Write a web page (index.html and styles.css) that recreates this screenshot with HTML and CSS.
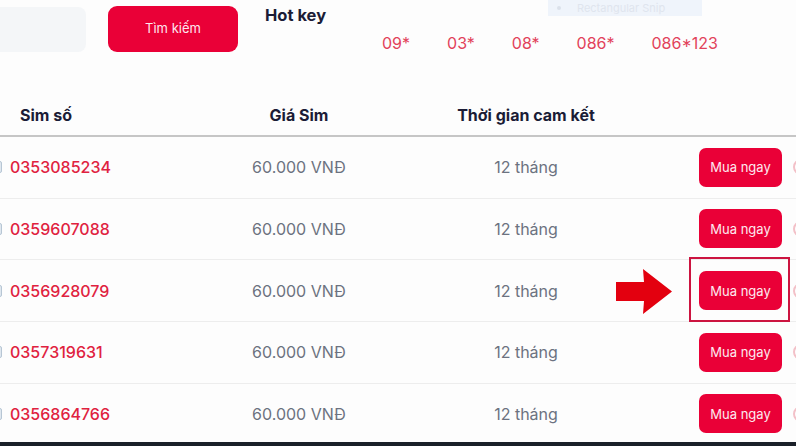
FILE: index.html
```html
<!DOCTYPE html>
<html lang="vi">
<head>
<meta charset="utf-8">
<link rel="stylesheet" href="styles.css">
</head>
<body>
<div class="page">
  <div class="snip"><span class="snip-dot"></span>Rectangular Snip</div>
  <div class="top">
    <div class="search-input"></div>
    <button class="btn-search">Tìm kiếm</button>
    <div class="hotkey">
      <div class="hotkey-title">Hot key</div>
      <div class="hotkey-list">
        <span>09*</span><span>03*</span><span>08*</span><span>086*</span><span>086*123</span>
      </div>
    </div>
  </div>
  <div class="table">
    <div class="row head">
      <div class="c1">Sim số</div>
      <div class="c2">Giá Sim</div>
      <div class="c3">Thời gian cam kết</div>
      <div class="c4"></div>
    </div>
    <div class="row">
      <div class="c1"><span class="chk"></span><span class="num">0353085234</span></div>
      <div class="c2">60.000 VNĐ</div>
      <div class="c3">12 tháng</div>
      <div class="c4"><button class="buy">Mua ngay</button><span class="ring"></span></div>
    </div>
    <div class="row">
      <div class="c1"><span class="chk"></span><span class="num">0359607088</span></div>
      <div class="c2">60.000 VNĐ</div>
      <div class="c3">12 tháng</div>
      <div class="c4"><button class="buy">Mua ngay</button><span class="ring"></span></div>
    </div>
    <div class="row marked">
      <div class="c1"><span class="chk"></span><span class="num">0356928079</span></div>
      <div class="c2">60.000 VNĐ</div>
      <div class="c3">12 tháng</div>
      <div class="c4"><button class="buy">Mua ngay</button><span class="ring"></span></div>
      <svg class="arrow" width="58" height="47" viewBox="0 0 58 47"><polygon points="0,13 28,13 27,0 56,22.5 27,45 28,32 0,32" fill="#e3000f"/></svg>
      <div class="highlight"></div>
    </div>
    <div class="row">
      <div class="c1"><span class="chk"></span><span class="num">0357319631</span></div>
      <div class="c2">60.000 VNĐ</div>
      <div class="c3">12 tháng</div>
      <div class="c4"><button class="buy">Mua ngay</button><span class="ring"></span></div>
    </div>
    <div class="row">
      <div class="c1"><span class="chk"></span><span class="num">0356864766</span></div>
      <div class="c2">60.000 VNĐ</div>
      <div class="c3">12 tháng</div>
      <div class="c4"><button class="buy">Mua ngay</button><span class="ring"></span></div>
    </div>
  </div>
  <div class="taskbar"></div>
</div>
</body>
</html>
```

FILE: styles.css
```css
html, body {
  margin: 0;
  padding: 0;
  overflow: hidden;
  background: #fdfdfd;
}
.page {
  position: relative;
  width: 796px;
  height: 446px;
  overflow: hidden;
  font-family: Inter, "Liberation Sans", sans-serif;
  background: #fdfdfd;
}
.snip {
  position: absolute;
  left: 548px;
  top: 0;
  width: 154px;
  height: 16px;
  background: #eff4fb;
  color: #dfe5ee;
  font-size: 11px;
  line-height: 14px;
  display: flex;
  align-items: center;
  padding-left: 9px;
  box-sizing: border-box;
}
.snip-dot {
  width: 4px;
  height: 4px;
  background: #dbe1ea;
  border-radius: 50%;
  margin-right: 16px;
}
.top {
  height: 80px;
  box-sizing: border-box;
  padding-top: 6px;
  display: flex;
  align-items: flex-start;
}
.search-input {
  width: 86px;
  height: 45px;
  margin-top: 1px;
  background: #f4f6f8;
  border-radius: 0 8px 8px 0;
}
.btn-search {
  margin-left: 22px;
  width: 130px;
  height: 46px;
  border: none;
  border-radius: 9px;
  background: #ea0037;
  color: #fde7ee;
  font-family: Inter, "Liberation Sans", sans-serif;
  font-size: 13px;
  padding: 0;
  padding-bottom: 2px;
}
.hotkey {
  margin-left: 27px;
  margin-top: -1px;
}
.hotkey-title {
  font-size: 16.5px;
  line-height: 20px;
  font-weight: 700;
  color: #1b1c36;
}
.hotkey-list {
  margin-top: 8px;
  margin-left: 117px;
  display: flex;
  gap: 37px;
  font-size: 16px;
  line-height: 20px;
  color: #e2425a;
}
.row {
  display: grid;
  grid-template-columns: 200px 198px 256px 1fr;
  align-items: center;
  height: 60.67px;
  border-bottom: 1px solid #ededed;
  font-size: 16px;
  line-height: 20px;
  color: #6c7280;
}
.row.head {
  height: auto;
  padding: 25px 0 10px;
  border-bottom: 2px solid #c6c6c6;
  font-weight: 700;
  color: #1b1c36;
}
.head .c1 {
  padding-left: 20px;
}
.c1 {
  display: flex;
  align-items: center;
}
.c2, .c3 {
  text-align: center;
}
.c4 {
  display: flex;
  align-items: center;
  padding-left: 45px;
}
.chk {
  flex: none;
  width: 12px;
  height: 10px;
  margin-left: -12px;
  margin-right: 8px;
  background: #dfe7ef;
  border: 1px solid #b7c6d4;
  border-radius: 2px;
}
.num {
  color: #e0223f;
  font-weight: 500;
}
.buy {
  width: 83px;
  height: 39px;
  border: none;
  border-radius: 7px;
  background: #ea0037;
  color: #fde9ef;
  font-family: Inter, "Liberation Sans", sans-serif;
  font-size: 13px;
  padding: 0;
}
.ring {
  flex: none;
  width: 12px;
  height: 12px;
  margin-left: 11px;
  border: 2px solid #f3c1c8;
  border-radius: 50%;
}
.marked {
  position: relative;
}
.arrow {
  position: absolute;
  left: 616px;
  top: 9px;
}
.highlight {
  position: absolute;
  left: 689px;
  top: -3px;
  width: 101px;
  height: 65px;
  box-sizing: border-box;
  border: 2px solid #cc1440;
}
.taskbar {
  position: absolute;
  left: 0;
  bottom: 0;
  width: 796px;
  height: 4px;
  background: #1a2029;
}
```
